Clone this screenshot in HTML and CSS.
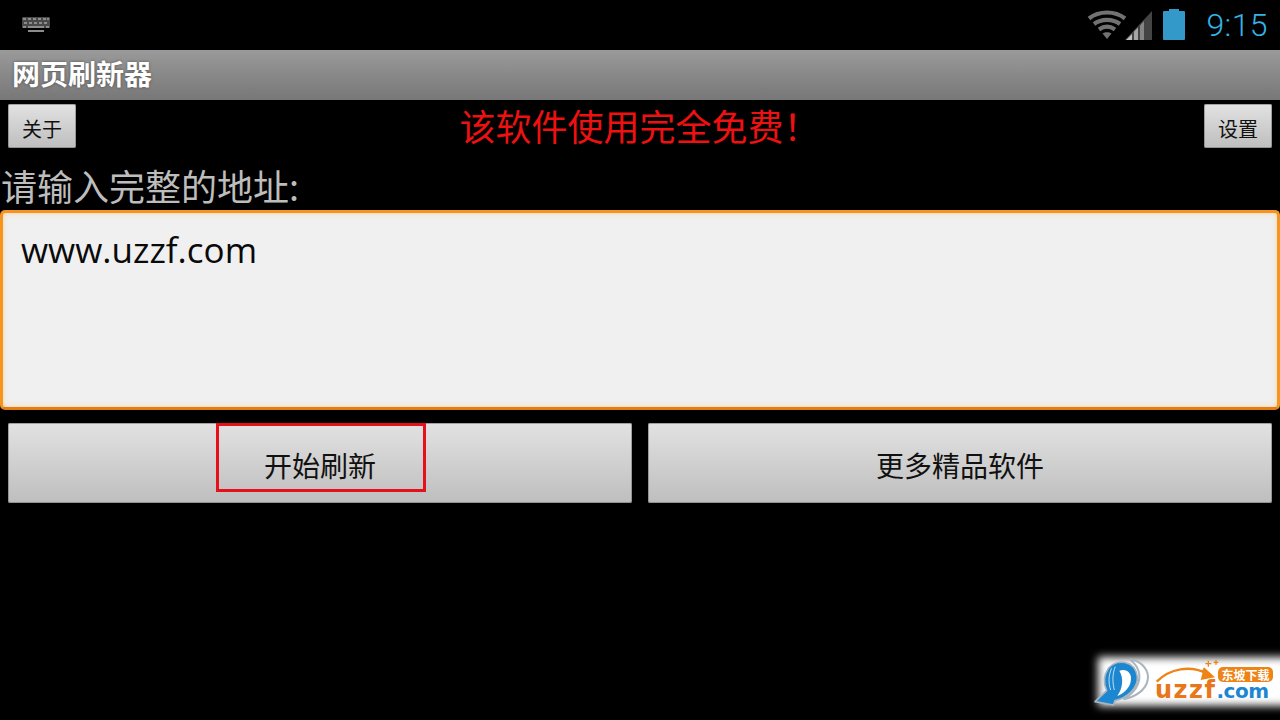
FILE: index.html
```html
<!DOCTYPE html>
<html lang="zh-CN">
<head>
<meta charset="utf-8">
<title>网页刷新器</title>
<link rel="stylesheet" href="styles.css">
</head>
<body>
<div class="statusbar">
  <svg class="kbd" width="30" height="18" viewBox="0 0 30 18">
    <rect x="1" y="1" width="28" height="11" rx="1" fill="#4a4a4a"/>
    <g fill="#8c8c8c">
      <rect x="2" y="2" width="3" height="2"/><rect x="7" y="2" width="3" height="2"/><rect x="12" y="2" width="3" height="2"/><rect x="17" y="2" width="3" height="2"/><rect x="22" y="2" width="3" height="2"/><rect x="26" y="2" width="2" height="2"/>
      <rect x="3" y="6" width="3" height="2"/><rect x="8" y="6" width="3" height="2"/><rect x="13" y="6" width="3" height="2"/><rect x="18" y="6" width="3" height="2"/><rect x="23" y="6" width="3" height="2"/>
      <rect x="2" y="10" width="3" height="2"/><rect x="7" y="10" width="16" height="2"/><rect x="25" y="10" width="3" height="2"/>
      <rect x="7" y="14" width="16" height="2"/>
    </g>
  </svg>
  <div class="status-right">
    <svg class="wifi" width="40" height="30" viewBox="0 0 40 30">
      <g fill="none" stroke="#727272" stroke-width="4.200">
        <path d="M2 8.500C12 0.500 28 0.500 38 8.500"/>
        <path d="M7 14C14.500 8.500 25.500 8.500 33 14"/>
        <path d="M12 19.500C17 16 23 16 28 19.500"/>
      </g>
      <path d="M15.500 23.500C18 21.800 22 21.800 24.500 23.500L20 29Z" fill="#727272"/>
    </svg>
    <svg class="signal" width="28" height="30" viewBox="0 0 28 30">
      <path d="M0 30L27 1V30Z" fill="#444"/>
      <path d="M1 30L7 24V30Z" fill="#bdbdbd"/>
      <path d="M9 30V21.500L13 17.500V30Z" fill="#a5a5a5"/>
      <path d="M15 30V15.500L19 11V30Z" fill="#858585"/>
    </svg>
    <svg class="battery" width="22" height="31" viewBox="0 0 22 31">
      <path d="M6 0H16V2H21a1 1 0 0 1 1 1V30a1 1 0 0 1-1 1H1a1 1 0 0 1-1-1V3a1 1 0 0 1 1-1H6Z" fill="#3299c8"/>
    </svg>
    <span class="clock">9:15</span>
  </div>
</div>

<header class="titlebar">网页刷新器</header>

<main class="content">
  <div class="toprow">
    <button class="btn btn-small">关于</button>
    <div class="notice">该软件使用完全免费！</div>
    <button class="btn btn-small">设置</button>
  </div>
  <label class="prompt" for="url">请输入完整的地址:</label>
  <div class="urlbox" id="url">www.uzzf.com</div>
  <div class="actions">
    <button class="btn btn-large">开始刷新<span class="highlight"></span></button>
    <button class="btn btn-large">更多精品软件</button>
  </div>
</main>

<div class="watermark">
  <svg class="wm-art" width="200" height="80" viewBox="0 0 600 240">
    <path d="M150 58C190 65 208 95 203 120C198 150 165 172 130 178C160 160 180 135 178 105C176 85 165 70 150 58Z" fill="#fff" stroke="#a9b5bf" stroke-width="6"/>
    <path d="M85 85C110 55 165 60 172 110C175 145 140 175 105 182L100 195L45 185L80 152C70 130 72 105 85 85Z" fill="#1c87d0" stroke="#a9b5bf" stroke-width="5" stroke-linejoin="round"/>
    <path d="M118 92C140 85 158 100 152 125C148 145 130 160 112 168C128 145 132 115 118 92Z" fill="#fff"/>
    <g fill="none" stroke="#bfe0f5" stroke-width="3">
      <path d="M95 85C85 105 85 130 92 150"/>
      <path d="M106 80C97 100 97 128 103 150"/>
    </g>
    <path d="M230 125C270 85 330 75 380 100" fill="none" stroke="#ee8417" stroke-width="7"/>
    <path d="M372 82L405 112L362 120Z" fill="#ee8417"/>
    <g fill="none" stroke="#ee8417" stroke-width="4">
      <path d="M385 62V80M376 71H394"/>
      <path d="M408 60V74M401 67H415"/>
      <path d="M372 84V98M365 91H379"/>
    </g>
  </svg>
  <span class="wm-badge">东坡下载</span>
  <span class="wm-domain"><span class="wm-u">uzzf</span><span class="wm-com">.com</span></span>
</div>
</body>
</html>
```

FILE: styles.css
```css
* { box-sizing: border-box; }
html, body { margin: 0; padding: 0; }
body {
  width: 1280px;
  height: 720px;
  overflow: hidden;
  position: relative;
  background: #000;
  font-family: "Noto Sans CJK SC", "Open Sans", sans-serif;
}
.statusbar {
  height: 50px;
  display: flex;
  align-items: center;
  justify-content: space-between;
  padding: 0 12px 0 21px;
  background: #000;
}
.kbd { display: block; margin-top: -1px; filter: blur(.5px); }
.status-right { display: flex; align-items: center; }
.wifi { display: block; margin-top: -1px; filter: blur(.5px); }
.signal { display: block; margin-left: -2px; margin-top: -1px; filter: blur(.4px); }
.battery { display: block; margin-left: 10px; margin-top: -1px; filter: blur(.4px); }
.clock {
  margin-left: 21px;
  font-family: Roboto, sans-serif;
  font-weight: 300;
  font-size: 32px;
  line-height: 50px;
  letter-spacing: 0.4px;
  color: #33b5e5;
}
.titlebar {
  height: 50px;
  padding-left: 12px;
  background: linear-gradient(#9a9a9a, #777);
  color: #fff;
  font-size: 28px;
  font-weight: 700;
  line-height: 46px;
  text-shadow: 0 0 3px rgba(0, 0, 0, .45);
}
.content { display: flex; flex-direction: column; }
.toprow {
  display: flex;
  align-items: flex-start;
  justify-content: space-between;
  padding: 4px 8px 0;
  height: 62px;
}
.notice {
  color: #ee1111;
  font-family: "Noto Sans CJK TC", "Noto Sans CJK SC", sans-serif;
  font-size: 36px;
  line-height: 46px;
  margin-top: -2px;
  margin-left: -1px;
}
.btn {
  border: 0;
  padding: 0;
  font-family: inherit;
  color: #111;
  background: linear-gradient(#e2e2e2, #bebebe);
  border-radius: 2px;
  box-shadow: inset 0 0 0 1px rgba(110, 110, 110, .55);
}
.btn-small {
  width: 68px;
  height: 44px;
  font-size: 20px;
  line-height: 50px;
  display: block;
}
.prompt {
  display: block;
  height: 48px;
  padding-left: 1px;
  color: #bdbdbd;
  font-size: 36px;
  line-height: 46px;
  white-space: nowrap;
}
.urlbox {
  height: 200px;
  border: 3px solid #f5941f;
  border-bottom-color: #e37d12;
  border-radius: 5px;
  background: #f0f0f0;
  box-shadow: inset 0 0 5px rgba(255, 200, 130, .8);
  padding: 14px 18px;
  color: #0a0a0a;
  font-family: "Open Sans", sans-serif;
  font-size: 35px;
  line-height: 46px;
}
.actions {
  display: flex;
  gap: 16px;
  padding: 13px 8px 0;
}
.btn-large {
  position: relative;
  flex: 1;
  height: 80px;
  font-size: 28px;
  padding-top: 4px;
}
.highlight {
  position: absolute;
  left: 208px;
  top: 0;
  width: 210px;
  height: 69px;
  border: 3px solid #e4101a;
}
.watermark {
  position: absolute;
  right: 0;
  bottom: 0;
  width: 200px;
  height: 80px;
}
.watermark::before {
  content: "";
  position: absolute;
  left: 18px;
  top: 17px;
  right: -20px;
  height: 49px;
  background: #fff;
  filter: blur(4px);
}
.wm-art { position: absolute; left: 0; top: 0; display: block; }
.wm-badge {
  position: absolute;
  left: 138px;
  top: 27px;
  width: 55px;
  border-radius: 5px;
  background: #ee8417;
  color: #fff;
  font-size: 12px;
  font-weight: 700;
  line-height: 15px;
  text-align: center;
  white-space: nowrap;
}
.wm-domain {
  position: absolute;
  left: 75px;
  top: 43px;
  font-family: "DejaVu Sans", sans-serif;
  font-weight: 700;
  line-height: 14px;
  white-space: nowrap;
}
.wm-u { color: #e8761a; font-size: 24px; letter-spacing: 1.500px; }
.wm-com { color: #1c87d0; font-size: 20px; letter-spacing: -.5px; }
```
